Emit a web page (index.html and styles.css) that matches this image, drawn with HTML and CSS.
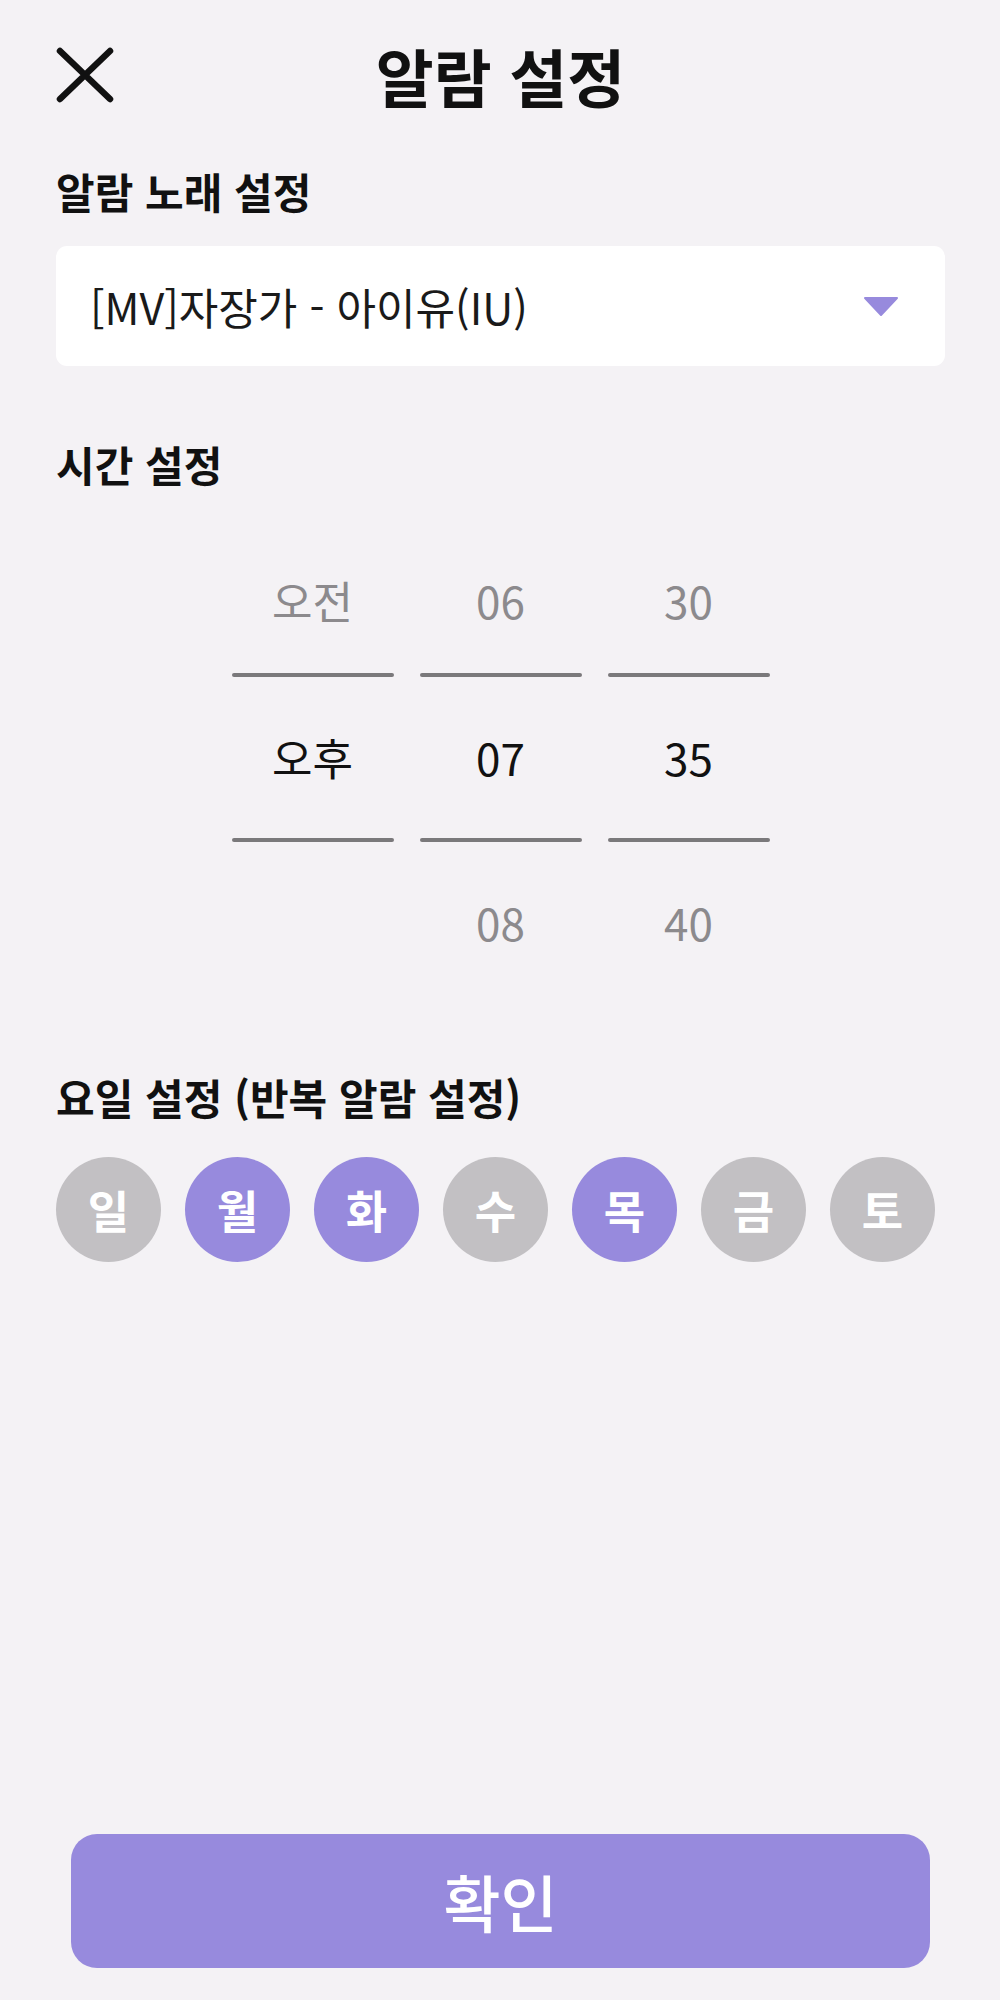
FILE: index.html
```html
<!DOCTYPE html>
<html lang="ko">
<head>
<meta charset="utf-8">
<title>알람 설정</title>
<link rel="stylesheet" href="styles.css">
</head>
<body>
<div class="screen">
  <header class="header">
    <button class="close" aria-label="닫기">
      <svg width="58" height="56" viewBox="0 0 58 56"><path d="M4 4 L54 52 M54 4 L4 52" stroke="#111" stroke-width="6.5" stroke-linecap="round" fill="none"/></svg>
    </button>
    <h1 class="title">알람 설정</h1>
    <span class="spacer"></span>
  </header>

  <h2 class="label label-song">알람 노래 설정</h2>
  <div class="select">
    <span class="select-text">[MV]자장가 - 아이유(IU)</span>
    <svg class="caret" width="36" height="21" viewBox="0 0 36 21"><path d="M2 2 L34 2 L18 19 Z" fill="#978add" stroke="#978add" stroke-width="2" stroke-linejoin="round"/></svg>
  </div>

  <h2 class="label label-time">시간 설정</h2>
  <div class="picker">
    <div class="col">
      <div class="item item-top dim">오전</div>
      <div class="line"></div>
      <div class="item sel">오후</div>
      <div class="line"></div>
      <div class="item dim"></div>
    </div>
    <div class="col">
      <div class="item item-top dim">06</div>
      <div class="line"></div>
      <div class="item sel">07</div>
      <div class="line"></div>
      <div class="item dim">08</div>
    </div>
    <div class="col">
      <div class="item item-top dim">30</div>
      <div class="line"></div>
      <div class="item sel">35</div>
      <div class="line"></div>
      <div class="item dim">40</div>
    </div>
  </div>

  <h2 class="label label-days">요일 설정 (반복 알람 설정)</h2>
  <div class="days">
    <span class="day">일</span>
    <span class="day on">월</span>
    <span class="day on">화</span>
    <span class="day">수</span>
    <span class="day on">목</span>
    <span class="day">금</span>
    <span class="day">토</span>
  </div>

  <button class="confirm">확인</button>
</div>
</body>
</html>
```

FILE: styles.css
```css
* { box-sizing: border-box; }
html, body {
  margin: 0;
  padding: 0;
  background: #f4f2f5;
}
body {
  font-family: "Noto Sans CJK KR", "Noto Sans", sans-serif;
  color: #111;
}
.screen {
  min-height: 2000px;
  display: flex;
  flex-direction: column;
  padding: 0 55px 32px 56px;
}
.header {
  height: 150px;
  display: grid;
  grid-template-columns: 1fr auto 1fr;
  align-items: center;
}
.close {
  background: none;
  border: 0;
  padding: 0;
  width: 58px;
  height: 56px;
  display: flex;
  justify-self: start;
}
.title {
  margin: 0;
  font-size: 63px;
  font-weight: 700;
  line-height: 1.2;
}
.label {
  margin: 0;
  font-size: 42px;
  font-weight: 700;
  line-height: 1.2;
}
.label-song { margin-top: 16px; }
.label-time { margin-top: 73px; }
.label-days { margin-top: 69px; }

.select {
  margin-top: 30px;
  height: 120px;
  background: #fff;
  border-radius: 11px;
  display: flex;
  align-items: center;
  justify-content: space-between;
  padding: 0 46px 0 34px;
}
.select-text {
  font-size: 43px;
  font-weight: 400;
  color: #1a1a1a;
  line-height: 1.2;
}

.picker {
  margin-top: 39px;
  display: flex;
  justify-content: center;
  gap: 26px;
}
.col {
  width: 162px;
  display: flex;
  flex-direction: column;
}
.item {
  height: 161px;
  display: flex;
  align-items: center;
  justify-content: center;
  font-size: 44px;
  line-height: 1.2;
}
.item-top { height: 144px; }
.dim { color: #8c8a8d; }
.sel { color: #111; }
.line {
  height: 4px;
  background: #7a797b;
  border-radius: 2px;
}

.days {
  margin-top: 35px;
  display: flex;
  gap: 24px;
}
.day {
  width: 105px;
  height: 105px;
  border-radius: 50%;
  background: #c2c0c3;
  color: #fff;
  font-size: 45px;
  font-weight: 700;
  display: flex;
  align-items: center;
  justify-content: center;
}
.day.on { background: #978add; }

.confirm {
  margin: auto 15px 0;
  height: 134px;
  border: 0;
  border-radius: 26px;
  background: #978add;
  color: #fff;
  font-family: "Noto Sans CJK KR", "Noto Sans", sans-serif;
  font-size: 62px;
  font-weight: 500;
}
```
